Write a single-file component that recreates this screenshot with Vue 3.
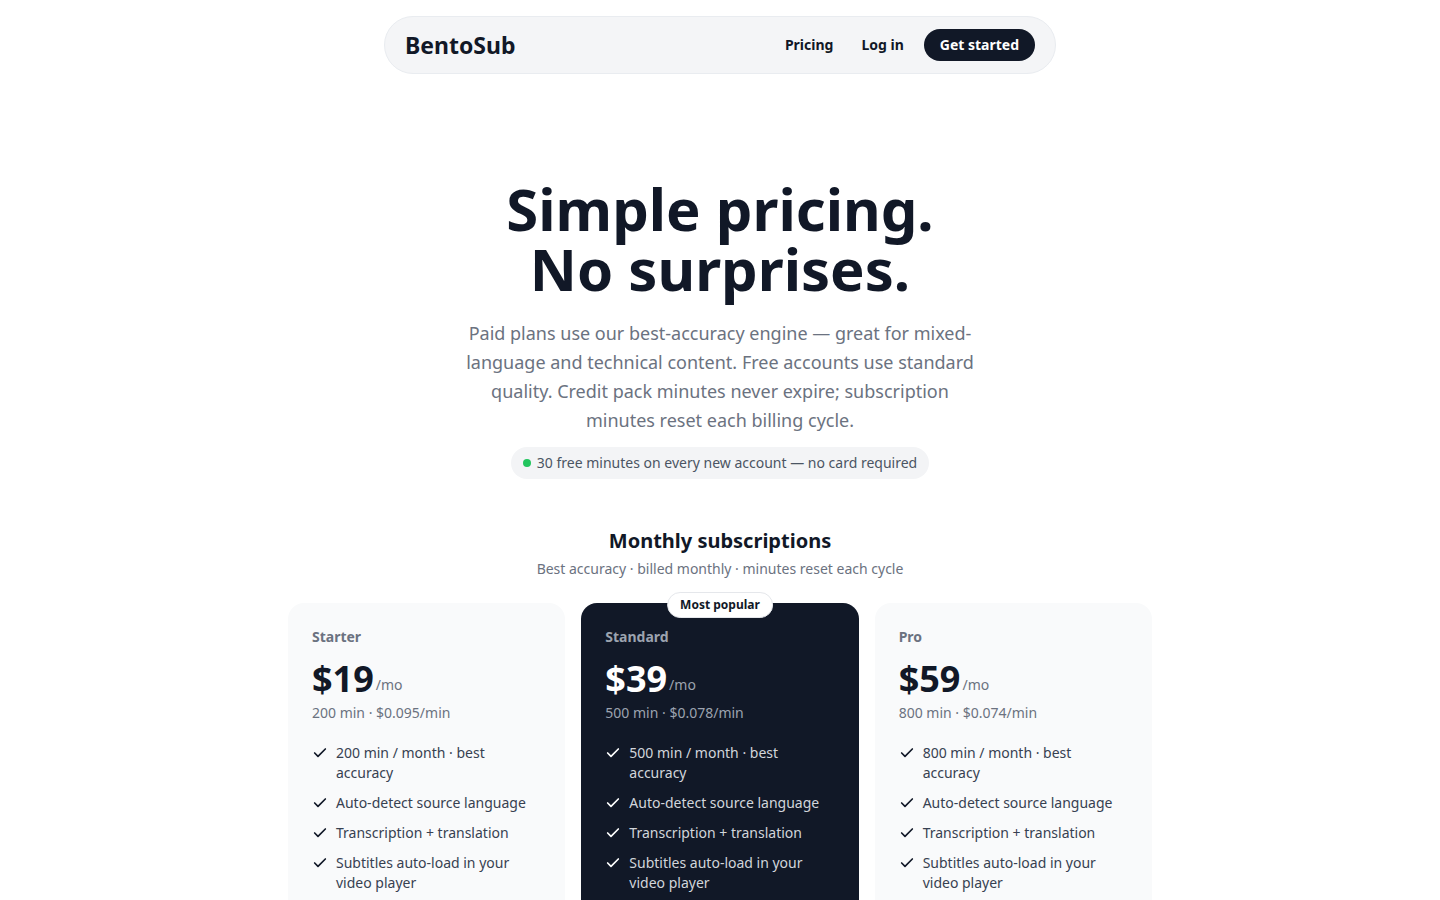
<script setup>
const plans = [
  { name: 'Starter', price: '$19', minutes: 200, rate: '$0.095/min' },
  { name: 'Standard', price: '$39', minutes: 500, rate: '$0.078/min', popular: true },
  { name: 'Pro', price: '$59', minutes: 800, rate: '$0.074/min' },
]
const shared = [
  'Auto-detect source language',
  'Transcription + translation',
  'Subtitles auto-load in your video player',
]
const featuresOf = (plan) => [`${plan.minutes} min / month · best accuracy`, ...shared]
</script>

<template>
  <div class="page">
    <header class="nav">
      <a class="brand" href="#">BentoSub</a>
      <nav class="links">
        <a class="link" href="#pricing">Pricing</a>
        <a class="link" href="#login">Log in</a>
        <a class="cta" href="#start">Get started</a>
      </nav>
    </header>

    <main id="pricing">
      <section class="hero">
        <h1>Simple pricing.<br />No surprises.</h1>
        <p class="lead">
          Paid plans use our best-accuracy engine — great for mixed-language and technical content.
          Free accounts use standard quality. Credit pack minutes never expire; subscription minutes
          reset each billing cycle.
        </p>
        <p class="pill"><span class="dot"></span>30 free minutes on every new account — no card required</p>
      </section>

      <section class="monthly">
        <h2>Monthly subscriptions</h2>
        <p class="sub">Best accuracy · billed monthly · minutes reset each cycle</p>
        <div class="plans">
          <article v-for="plan in plans" :key="plan.name" class="plan" :class="{ dark: plan.popular }">
            <span v-if="plan.popular" class="badge">Most popular</span>
            <h3>{{ plan.name }}</h3>
            <p class="price"><strong>{{ plan.price }}</strong><span>/mo</span></p>
            <p class="rate">{{ plan.minutes }} min · {{ plan.rate }}</p>
            <ul>
              <li v-for="feature in featuresOf(plan)" :key="feature">
                <svg viewBox="0 0 24 24" width="16" height="16" aria-hidden="true">
                  <path d="M20 6 9 17l-5-5" />
                </svg>
                <span>{{ feature }}</span>
              </li>
            </ul>
          </article>
        </div>
      </section>
    </main>
  </div>
</template>

<style>
html {
  scrollbar-width: none;
}
body {
  margin: 0;
  background: #fff;
}
</style>

<style scoped>
.page {
  padding: 16px;
  font-family: "Noto Sans", sans-serif;
  font-size: 14px;
  line-height: 20px;
  color: #111827;
}
h1, h2, h3, p, ul {
  margin: 0;
  padding: 0;
}
a {
  color: inherit;
  text-decoration: none;
}
.nav {
  display: flex;
  align-items: center;
  justify-content: space-between;
  box-sizing: border-box;
  max-width: 672px;
  margin: 0 auto;
  padding: 12px 20px;
  border: 1px solid #e9ecf0;
  border-radius: 999px;
  background: #f4f5f7;
}
.brand {
  font-size: 23px;
  line-height: 32px;
  font-weight: 700;
}
.links {
  display: flex;
  align-items: center;
  gap: 4px;
  font-weight: 700;
}
.link {
  padding: 6px 12px;
}
.cta {
  margin-left: 4px;
  padding: 6px 16px;
  border-radius: 999px;
  background: #111827;
  color: #fff;
}
.hero {
  display: flex;
  flex-direction: column;
  align-items: center;
  padding-top: 105px;
  text-align: center;
}
h1 {
  font-size: 58px;
  line-height: 60px;
  font-weight: 700;
}
.lead {
  max-width: 512px;
  margin-top: 20px;
  font-size: 18px;
  line-height: 29px;
  color: #6b7280;
}
.pill {
  display: flex;
  align-items: center;
  gap: 6px;
  margin-top: 12px;
  padding: 6px 12px;
  border-radius: 999px;
  background: #f3f4f6;
  color: #4b5563;
}
.dot {
  flex: none;
  width: 8px;
  height: 8px;
  border-radius: 50%;
  background: #22c55e;
}
.monthly {
  max-width: 864px;
  margin: 48px auto 0;
}
h2 {
  font-size: 20px;
  line-height: 28px;
  font-weight: 700;
  text-align: center;
}
.sub {
  margin-top: 4px;
  text-align: center;
  color: #6b7280;
}
.plans {
  display: grid;
  grid-template-columns: repeat(3, minmax(0, 1fr));
  gap: 16px;
  margin-top: 24px;
}
.plan {
  position: relative;
  padding: 24px 24px 96px;
  border-radius: 16px;
  background: #f9fafb;
}
h3 {
  font-size: 14px;
  line-height: 20px;
  font-weight: 700;
  color: #6b7280;
}
.price {
  display: flex;
  align-items: flex-end;
  gap: 2px;
  margin-top: 12px;
  color: #6b7280;
}
.price strong {
  font-size: 36px;
  line-height: 40px;
  font-weight: 700;
  color: #111827;
}
.price span {
  margin-bottom: 4px;
}
.rate {
  margin-top: 4px;
  color: #6b7280;
}
ul {
  display: grid;
  gap: 10px;
  margin-top: 20px;
  list-style: none;
  color: #374151;
}
li {
  display: flex;
  gap: 8px;
}
svg {
  flex: none;
  margin-top: 2px;
  fill: none;
  stroke: #111827;
  stroke-width: 2.5;
  stroke-linecap: round;
  stroke-linejoin: round;
}
.badge {
  position: absolute;
  top: -11px;
  left: 50%;
  transform: translateX(-50%);
  padding: 4px 12px;
  border: 1px solid #e5e7eb;
  border-radius: 999px;
  background: #fff;
  font-size: 12px;
  line-height: 16px;
  font-weight: 700;
  white-space: nowrap;
}
.dark {
  background: #111827;
}
.dark h3, .dark .price, .dark .rate {
  color: #9ca3af;
}
.dark .price strong {
  color: #fff;
}
.dark ul {
  color: #d1d5db;
}
.dark svg {
  stroke: #fff;
}
</style>
